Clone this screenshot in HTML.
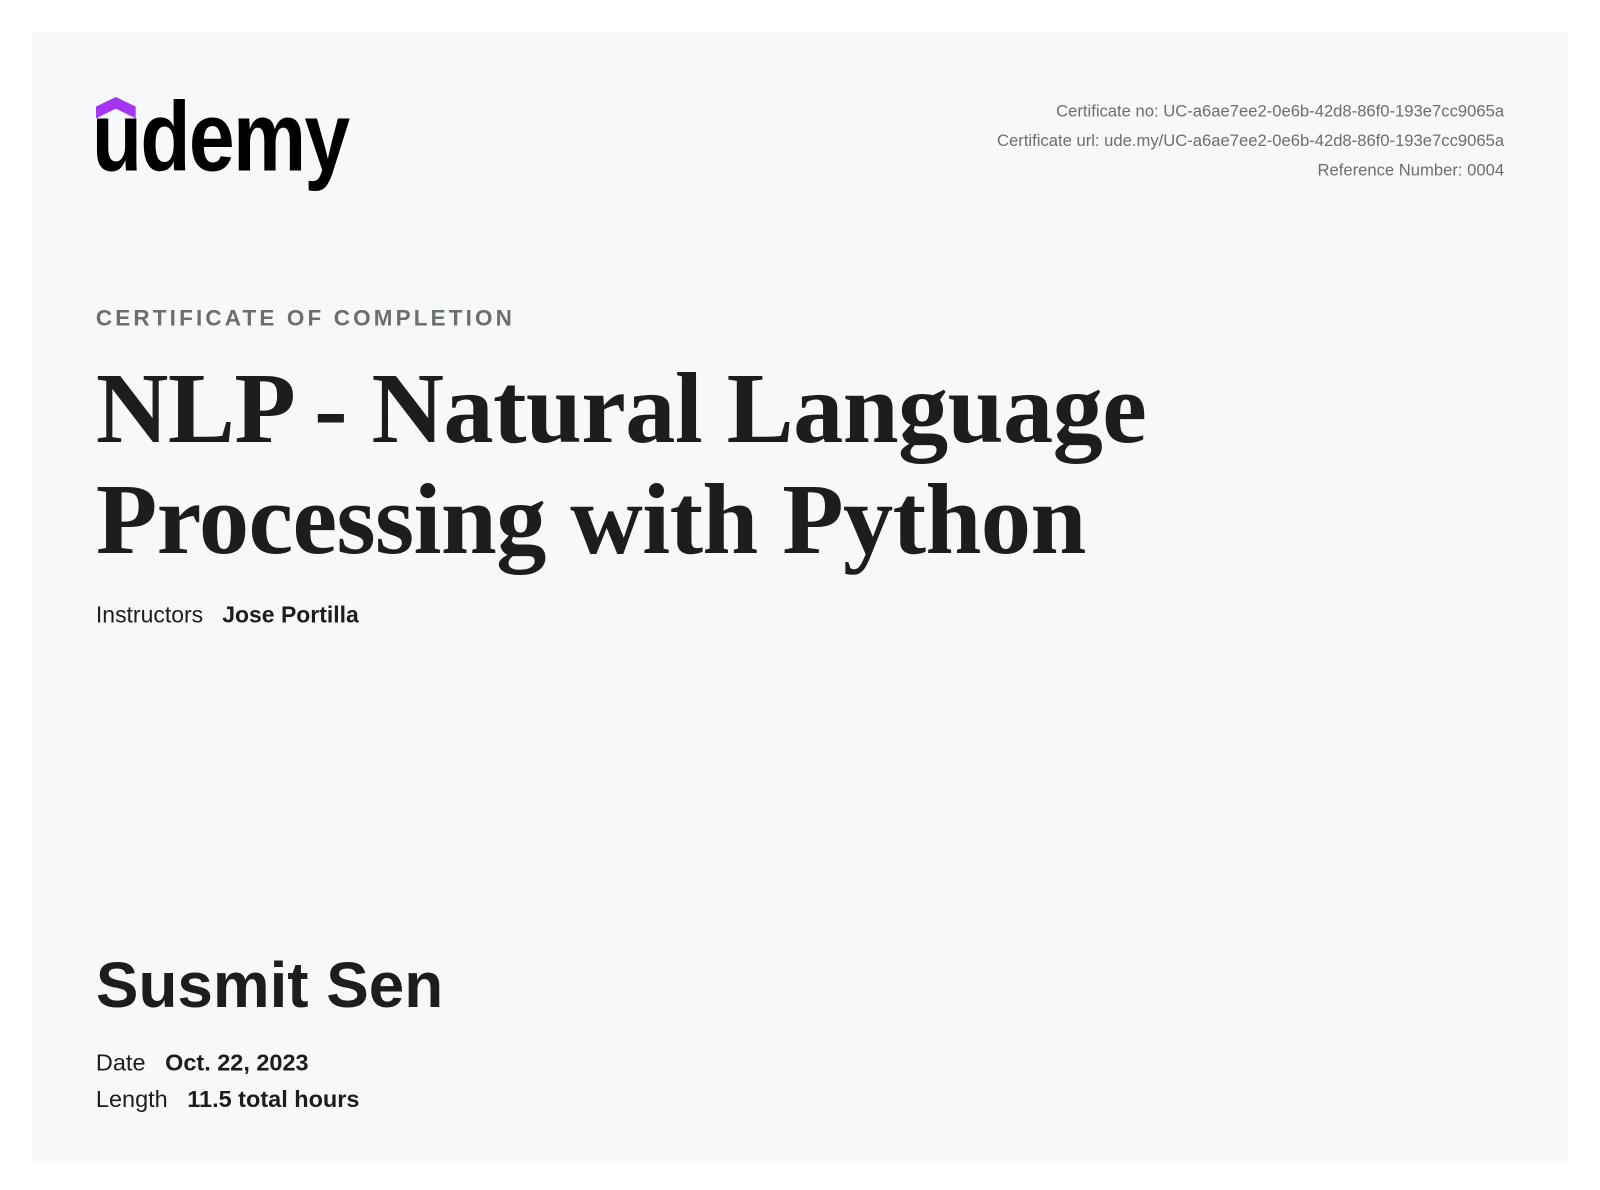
<!DOCTYPE html>
<html><head><meta charset="utf-8"><style>
html,body{margin:0;padding:0;background:#fff;width:1600px;height:1190px;overflow:hidden}
#w{position:absolute;left:0;top:0;width:1568px;height:1166px;transform:scale(1.020408);transform-origin:0 0}
.card{position:absolute;left:31px;top:31px;width:1506px;height:1107px;background:#f7f8fa}
.a{position:absolute;font-family:"Liberation Sans",sans-serif;color:#1c1d1f;white-space:nowrap}
.meta{right:94px;text-align:right;font-size:16.3px;color:#6a6f73}
</style></head><body><div id="w">
<div class="card"></div>
<svg class="a" style="left:94px;top:95px" width="40" height="22" viewBox="0 0 40 22"><path d="M0 9.5 L19.5 0 L39 9.5 L39 21 L19.5 11.5 L0 21Z" fill="#a435f0"/></svg>
<div class="a" style="left:90px;top:80px;font-size:96px;font-weight:bold;letter-spacing:-2px;transform:scaleX(0.84);transform-origin:left top;color:#000">udemy</div>
<div class="a meta" style="top:100px">Certificate no: UC-a6ae7ee2-0e6b-42d8-86f0-193e7cc9065a</div>
<div class="a meta" style="top:129px">Certificate url: ude.my/UC-a6ae7ee2-0e6b-42d8-86f0-193e7cc9065a</div>
<div class="a meta" style="top:158px">Reference Number: 0004</div>
<div class="a" style="left:94px;top:299px;font-size:22px;font-weight:bold;letter-spacing:3.1px;color:#6a6f73">CERTIFICATE OF COMPLETION</div>
<div class="a" style="left:94px;top:346px;font-family:'Liberation Serif',serif;font-weight:bold;font-size:98.5px;line-height:109px;letter-spacing:-0.6px">NLP - Natural Language<br>Processing with Python</div>
<div class="a" style="left:94px;top:590px;font-size:22.5px">Instructors &nbsp;&nbsp;<b>Jose Portilla</b></div>
<div class="a" style="left:94px;top:930px;font-size:62.5px;font-weight:bold">Susmit Sen</div>
<div class="a" style="left:94px;top:1028px;font-size:23px">Date &nbsp;&nbsp;<b>Oct. 22, 2023</b></div>
<div class="a" style="left:94px;top:1064px;font-size:23px">Length &nbsp;&nbsp;<b>11.5 total hours</b></div>
</div></body></html>
